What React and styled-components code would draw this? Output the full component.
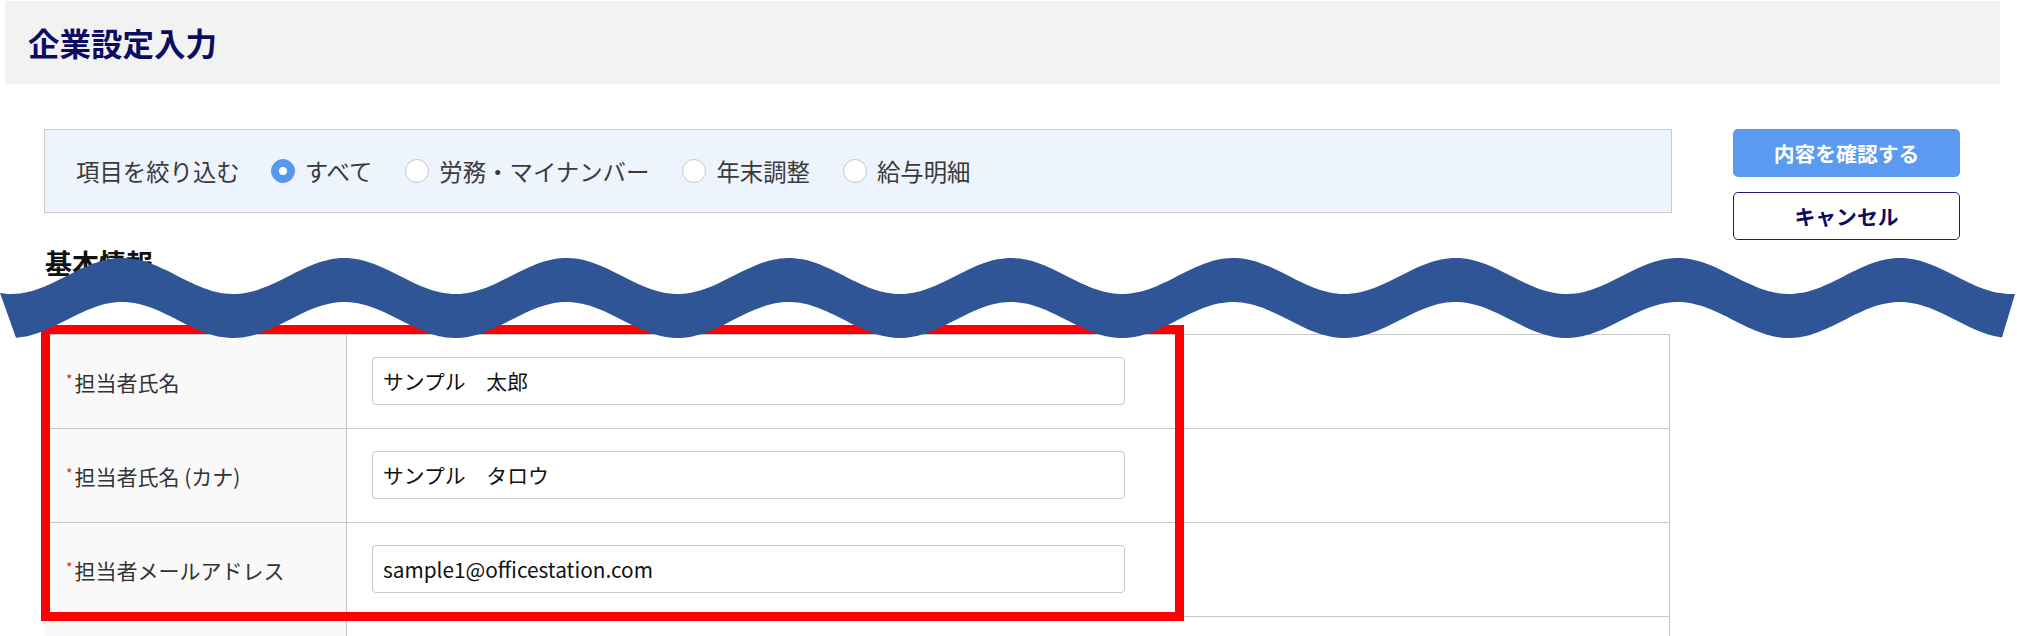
import React from 'react'
import styled, { createGlobalStyle } from 'styled-components'

const GlobalStyle = createGlobalStyle`
  html, body {
    margin: 0;
    padding: 0;
    overflow: hidden;
    background: #fff;
  }
  body {
    font-family: "Noto Sans CJK JP", "Noto Sans", sans-serif;
    color: #333;
  }
`

const Page = styled.div`
  position: relative;
  width: 2017px;
  min-height: 636px;
`

const Header = styled.header`
  display: flex;
  align-items: center;
  height: 83px;
  margin: 1px 17px 0 5px;
  padding-left: 23px;
  background: #f2f2f2;
`

const Title = styled.h1`
  margin: 0;
  font-size: 31.5px;
  font-weight: 700;
  line-height: 1;
  color: #0b0b63;
`

const Body = styled.div`
  display: flex;
  align-items: flex-start;
  gap: 61px;
  padding: 45px 0 0 44px;
`

const Main = styled.main`
  width: 1628px;
`

const FilterBox = styled.div`
  display: flex;
  align-items: center;
  height: 82px;
  padding-left: 31px;
  background: #eef4fe;
  border: 1px solid #c9c9c9;
  font-size: 23.4px;
  color: #3a3a3a;
`

const FilterLabel = styled.span`
  margin-right: 31px;
`

const Option = styled.label`
  display: flex;
  align-items: center;
  gap: 10px;
  margin-right: 33px;
`

const Radio = styled.span`
  box-sizing: border-box;
  display: inline-flex;
  align-items: center;
  justify-content: center;
  width: 24px;
  height: 24px;
  border-radius: 50%;
  background: ${p => (p.checked ? '#5897ef' : '#fff')};
  border: 1px solid ${p => (p.checked ? '#5897ef' : '#c6c6c6')};

  &::after {
    content: '';
    display: ${p => (p.checked ? 'block' : 'none')};
    width: 8px;
    height: 8px;
    border-radius: 50%;
    background: #fff;
  }
`

const SectionTitle = styled.h2`
  margin: 36px 0 58px 1px;
  font-size: 27px;
  font-weight: 700;
  line-height: 27px;
  color: #111;
`

const TableWrap = styled.div`
  position: relative;
  width: 1626px;
`

const Table = styled.div`
  border-top: 1px solid #c8c8c8;
  border-right: 1px solid #c8c8c8;
`

const Row = styled.div`
  display: grid;
  grid-template-columns: 303px 1fr;
  border-bottom: 1px solid #c8c8c8;
`

const LabelCell = styled.div`
  display: flex;
  align-items: center;
  padding-left: 22px;
  background: #f9f9f9;
  border-right: 1px solid #c8c8c8;
  font-size: 21px;
  color: #333;
`

const Required = styled.span`
  color: #e0201b;
  font-size: 14px;
  margin-right: 2px;
  align-self: flex-start;
  margin-top: 34px;
`

const FieldCell = styled.div`
  padding: 22px 25px 23px;
  min-height: 48px;
`

const Input = styled.div`
  box-sizing: border-box;
  display: flex;
  align-items: center;
  width: 753px;
  height: 48px;
  padding: 0 10px;
  border: 1px solid #c6c6c6;
  border-radius: 4px;
  background: #fff;
  font-size: 20.8px;
  color: #111;
  white-space: pre;
`

const Highlight = styled.div`
  position: absolute;
  left: -3px;
  top: -9px;
  width: 1143px;
  height: 296px;
  box-sizing: border-box;
  border: 9px solid #ff0000;
  pointer-events: none;
`

const Side = styled.aside`
  display: flex;
  flex-direction: column;
  gap: 15px;
  width: 227px;
`

const Button = styled.button`
  box-sizing: border-box;
  height: 48px;
  border-radius: 5px;
  font-family: inherit;
  font-size: 20.8px;
  font-weight: 700;
  cursor: pointer;
  background: ${p => (p.primary ? '#5a9bf1' : '#fff')};
  color: ${p => (p.primary ? '#fff' : '#0b0b63')};
  border: ${p => (p.primary ? 'none' : '1.5px solid #1b1b74')};
`

const WaveLayer = styled.svg`
  position: absolute;
  left: 0;
  top: 250px;
  pointer-events: none;
`

const options = [
  { label: 'すべて', checked: true },
  { label: '労務・マイナンバー' },
  { label: '年末調整' },
  { label: '給与明細' }
]

const fields = [
  { label: '担当者氏名', value: 'サンプル　太郎' },
  { label: '担当者氏名 (カナ)', value: 'サンプル　タロウ' },
  { label: '担当者メールアドレス', value: 'sample1@officestation.com' }
]

// thick ribbon wave running across the page, slanted ends
const wavePath = () => {
  const period = 2000 / 9
  const mid = 297
  const amp = 18
  const half = 22
  const center = x => mid + amp * Math.cos((2 * Math.PI * (x - 11)) / period)
  const pts = []
  for (let x = 0; x < 2015; x += 4) pts.push(`${x} ${(center(x) - half).toFixed(1)}`)
  pts.push(`2015 ${(center(2015) - half).toFixed(1)}`)
  pts.push(`2002 ${(center(2002) + half).toFixed(1)}`)
  for (let x = 1998; x > 16; x -= 4) pts.push(`${x} ${(center(x) + half).toFixed(1)}`)
  pts.push(`16 ${(center(16) + half).toFixed(1)}`)
  return 'M' + pts.join(' L') + ' Z'
}

const Wave = () => (
  <WaveLayer width="2017" height="100" viewBox="0 250 2017 100">
    <path d={wavePath()} fill="#2f5597" />
  </WaveLayer>
)

export default function App () {
  return (
    <Page>
      <GlobalStyle />
      <Header>
        <Title>企業設定入力</Title>
      </Header>
      <Body>
        <Main>
          <FilterBox>
            <FilterLabel>項目を絞り込む</FilterLabel>
            {options.map(o => (
              <Option key={o.label}>
                <Radio checked={o.checked} />
                {o.label}
              </Option>
            ))}
          </FilterBox>
          <SectionTitle>基本情報</SectionTitle>
          <TableWrap>
            <Table>
              {fields.map(f => (
                <Row key={f.label}>
                  <LabelCell>
                    <Required>*</Required>
                    {f.label}
                  </LabelCell>
                  <FieldCell>
                    <Input>{f.value}</Input>
                  </FieldCell>
                </Row>
              ))}
              <Row>
                <LabelCell />
                <FieldCell />
              </Row>
            </Table>
            <Highlight />
          </TableWrap>
        </Main>
        <Side>
          <Button primary>内容を確認する</Button>
          <Button>キャンセル</Button>
        </Side>
      </Body>
      <Wave />
    </Page>
  )
}
